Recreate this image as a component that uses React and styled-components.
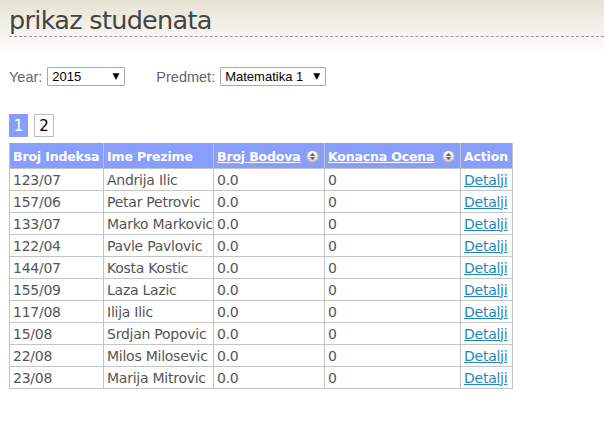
import React from "react";
import styled, { createGlobalStyle } from "styled-components";

const Global = createGlobalStyle`
  html, body { margin: 0; padding: 0; }
  body {
    background: linear-gradient(#e6e2d3 0px, #f3f1ea 28px, #ffffff 56px) no-repeat;
    background-size: 100% 60px;
    background-color: #fff;
    font-family: "DejaVu Sans", sans-serif;
    width: 604px;
    min-height: 434px;
  }
`;

const Header = styled.header`
  margin-left: 9px;
  border-bottom: 1px dashed #9a9a9a;
  padding-top: 5px;
`;

const Title = styled.h1`
  margin: 0;
  font-family: "DejaVu Sans", sans-serif;
  font-weight: normal;
  font-size: 25.5px;
  line-height: 31px;
  color: #444;
  letter-spacing: -0.7px;
`;

const Main = styled.main`
  padding: 30px 0 0 9px;
`;

const Filters = styled.div`
  display: flex;
  align-items: center;
  gap: 31px;
  height: 19px;
`;

const Field = styled.label`
  display: flex;
  align-items: center;
  gap: 5px;
  font-family: "Liberation Sans", Arial, sans-serif;
  font-size: 14.5px;
  color: #666;
`;

const SelectWrap = styled.span`
  position: relative;
  display: inline-block;
  width: ${(p) => p.$w}px;
  height: 19px;
`;

const Select = styled.select`
  appearance: none;
  -webkit-appearance: none;
  box-sizing: border-box;
  width: 100%;
  height: 19px;
  margin: 0;
  border: 1px solid #a9a9a9;
  border-radius: 1px;
  background: #fff;
  color: #000;
  font-family: "Liberation Sans", Arial, sans-serif;
  font-size: 13px;
  padding: 0 0 0 4px;
  line-height: 17px;
`;

const Arrow = styled.span`
  position: absolute;
  right: 6px;
  top: 3px;
  font-size: 9px;
  line-height: 12px;
  color: #000;
  pointer-events: none;
  font-family: "DejaVu Sans", sans-serif;
`;

const Pager = styled.div`
  display: flex;
  gap: 6px;
  margin-top: 28px;
`;

const Page = styled.span`
  box-sizing: border-box;
  width: ${(p) => (p.$active ? 19 : 20)}px;
  height: 23px;
  display: flex;
  align-items: center;
  justify-content: center;
  font-family: "DejaVu Sans", sans-serif;
  font-size: 15px;
  color: ${(p) => (p.$active ? "#fff" : "#000")};
  background: ${(p) => (p.$active ? "#889eff" : "#fff")};
  border: 1px solid ${(p) => (p.$active ? "#889eff" : "#bdbdbd")};
`;

const Table = styled.table`
  margin-top: 6px;
  border-collapse: collapse;
  table-layout: fixed;
  width: 504px;
  font-family: "DejaVu Sans", sans-serif;
`;

const Th = styled.th`
  width: ${(p) => p.$w - 7}px;
  height: 24px;
  padding: 0 3px;
  background: #889eff;
  color: #fff;
  font-size: 12.5px;
  letter-spacing: -0.15px;
  font-weight: bold;
  text-align: left;
  white-space: nowrap;
  border: 1px solid #c4c4c4;
  border-top-color: #889eff;
`;

const SortHead = styled.span`
  display: flex;
  align-items: center;
  justify-content: space-between;
  padding-right: 2px;
`;

const HeadLink = styled.a`
  color: #fff;
  text-decoration: underline;
`;

const Td = styled.td`
  height: 21px;
  padding: 0 3px;
  font-size: 14px;
  letter-spacing: -0.25px;
  color: #555;
  border: 1px solid #c4c4c4;
  white-space: nowrap;
`;

const Link = styled.a`
  color: #1f88b9;
  text-decoration: underline;
`;

const SortIcon = () => (
  <svg width="13" height="13" viewBox="0 0 12 12">
    <defs>
      <linearGradient id="sg" x1="0" y1="0" x2="0" y2="1">
        <stop offset="0" stopColor="#ffffff" />
        <stop offset="1" stopColor="#c9c9c9" />
      </linearGradient>
    </defs>
    <circle cx="6" cy="6" r="5.5" fill="url(#sg)" stroke="#a0a0a0" strokeWidth="0.8" />
    <path d="M3.6 5.2 L6 2.8 L8.4 5.2 Z" fill="#5a5a5a" />
    <path d="M3.6 6.8 L6 9.2 L8.4 6.8 Z" fill="#5a5a5a" />
  </svg>
);

const rows = [
  ["123/07", "Andrija Ilic"],
  ["157/06", "Petar Petrovic"],
  ["133/07", "Marko Markovic"],
  ["122/04", "Pavle Pavlovic"],
  ["144/07", "Kosta Kostic"],
  ["155/09", "Laza Lazic"],
  ["117/08", "Ilija Ilic"],
  ["15/08", "Srdjan Popovic"],
  ["22/08", "Milos Milosevic"],
  ["23/08", "Marija Mitrovic"],
];

export default function App() {
  return (
    <>
      <Global />
      <Header>
        <Title>prikaz studenata</Title>
      </Header>
      <Main>
        <Filters>
          <Field>
            Year:
            <SelectWrap $w={78}>
              <Select defaultValue="2015">
                <option>2015</option>
                <option>2014</option>
              </Select>
              <Arrow>▼</Arrow>
            </SelectWrap>
          </Field>
          <Field>
            Predmet:
            <SelectWrap $w={106}>
              <Select defaultValue="Matematika 1">
                <option>Matematika 1</option>
                <option>Matematika 2</option>
              </Select>
              <Arrow>▼</Arrow>
            </SelectWrap>
          </Field>
        </Filters>
        <Pager>
          <Page $active>1</Page>
          <Page>2</Page>
        </Pager>
        <Table>
          <thead>
            <tr>
              <Th $w={94}>Broj Indeksa</Th>
              <Th $w={110}>Ime Prezime</Th>
              <Th $w={111}>
                <SortHead>
                  <HeadLink href="#">Broj Bodova</HeadLink>
                  <SortIcon />
                </SortHead>
              </Th>
              <Th $w={136}>
                <SortHead>
                  <HeadLink href="#">Konacna Ocena</HeadLink>
                  <SortIcon />
                </SortHead>
              </Th>
              <Th $w={52}>Action</Th>
            </tr>
          </thead>
          <tbody>
            {rows.map(([idx, name]) => (
              <tr key={idx}>
                <Td>{idx}</Td>
                <Td>{name}</Td>
                <Td>0.0</Td>
                <Td>0</Td>
                <Td>
                  <Link href="#">Detalji</Link>
                </Td>
              </tr>
            ))}
          </tbody>
        </Table>
      </Main>
    </>
  );
}
